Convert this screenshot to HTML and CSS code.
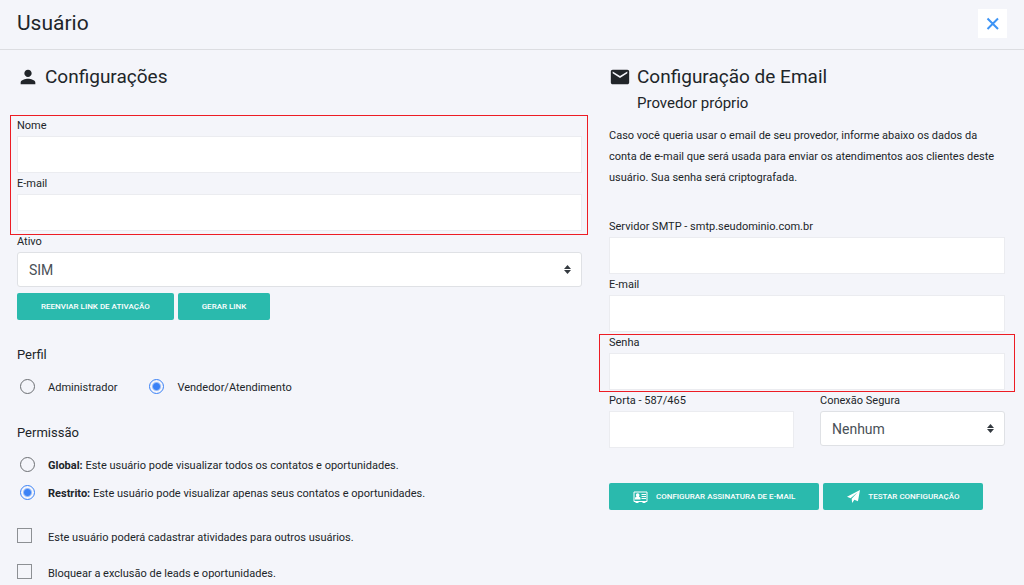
FILE: index.html
```
<!DOCTYPE html>
<html lang="pt-BR">
<head>
  <meta charset="UTF-8">
  <meta name="viewport" content="width=device-width, initial-scale=1.0">
  <title>Usuário</title>
  <link rel="stylesheet" href="styles.css">
</head>
<body>
  <header class="topbar">
    <h1>Usuário</h1>
    <button type="button" class="close" aria-label="Fechar">
      <svg width="14" height="14" viewBox="0 0 14 14"><path d="M1.500 1.500l10.500 10.500M12 1.500l-10.500 10.500"/></svg>
    </button>
  </header>

  <form class="columns">
    <section>
      <div class="heading">
        <svg class="icon-user" width="22" height="22" viewBox="0 0 24 24"><path d="M12 12c2.200 0 4-1.800 4-4s-1.800-4-4-4-4 1.800-4 4 1.800 4 4 4zm0 2c-2.700 0-8 1.300-8 4v2h16v-2c0-2.700-5.300-4-8-4z"/></svg>
        <h2>Configurações</h2>
      </div>

      <div class="highlight">
        <div class="field">
          <label for="nome">Nome</label>
          <input type="text" id="nome">
        </div>
        <div class="field">
          <label for="email">E-mail</label>
          <input type="text" id="email">
        </div>
      </div>
      <div class="field">
        <label for="ativo">Ativo</label>
        <select id="ativo">
          <option>SIM</option>
          <option>NÃO</option>
        </select>
      </div>
      <div class="buttons link-buttons">
        <button type="button" class="btn">REENVIAR LINK DE ATIVAÇÃO</button>
        <button type="button" class="btn">GERAR LINK</button>
      </div>

      <h3 id="perfil">Perfil</h3>
      <div class="options inline" role="radiogroup" aria-labelledby="perfil">
        <label class="option"><input type="radio" name="perfil"><span>Administrador</span></label>
        <label class="option"><input type="radio" name="perfil" checked><span>Vendedor/Atendimento</span></label>
      </div>

      <h3 id="permissao">Permissão</h3>
      <div class="options" role="radiogroup" aria-labelledby="permissao">
        <label class="option"><input type="radio" name="permissao"><span><b>Global:</b> Este usuário pode visualizar todos os contatos e oportunidades.</span></label>
        <label class="option"><input type="radio" name="permissao" checked><span><b>Restrito:</b> Este usuário pode visualizar apenas seus contatos e oportunidades.</span></label>
      </div>

      <div class="checks">
        <label class="option"><input type="checkbox"><span>Este usuário poderá cadastrar atividades para outros usuários.</span></label>
        <label class="option"><input type="checkbox"><span>Bloquear a exclusão de leads e oportunidades.</span></label>
      </div>
    </section>

    <section>
      <div class="heading heading-mail">
        <svg class="icon-mail" width="22" height="22" viewBox="0 0 24 24"><path d="M20 4H4c-1.100 0-2 .9-2 2v12c0 1.100.9 2 2 2h16c1.100 0 2-.9 2-2V6c0-1.100-.9-2-2-2zm0 4l-8 5-8-5V6l8 5 8-5v2z"/></svg>
        <div>
          <h2>Configuração de Email</h2>
          <p class="subtitle">Provedor próprio</p>
        </div>
      </div>
      <p class="intro">Caso você queria usar o email de seu provedor, informe abaixo os dados da conta de e-mail que será usada para enviar os atendimentos aos clientes deste usuário. Sua senha será criptografada.</p>

      <div class="field">
        <label for="smtp">Servidor SMTP - smtp.seudominio.com.br</label>
        <input type="text" id="smtp">
      </div>
      <div class="field">
        <label for="smtp-email">E-mail</label>
        <input type="text" id="smtp-email">
      </div>
      <div class="highlight highlight-wide">
        <div class="field">
          <label for="senha">Senha</label>
          <input type="password" id="senha">
        </div>
      </div>
      <div class="row">
        <div class="field">
          <label for="porta">Porta - 587/465</label>
          <input type="text" id="porta">
        </div>
        <div class="field">
          <label for="conexao">Conexão Segura</label>
          <select id="conexao">
            <option>Nenhum</option>
            <option>SSL</option>
            <option>TLS</option>
          </select>
        </div>
      </div>
      <div class="buttons mail-buttons">
        <button type="button" class="btn">
          <svg width="15" height="12" viewBox="0 0 15 12">
            <path class="line" d="M1 1h13v9.500H1zM8.500 3.500H13M8.500 5.500H13M8.500 7.500H13"/>
            <path d="M2 8.500V7.200c0-.8.600-1.300 1.500-1.500C3 5.200 2.900 4.700 2.900 4.100c0-1.100.7-1.900 1.800-1.900s1.800.8 1.800 1.900c0 .6-.2 1.100-.6 1.600.9.200 1.600.7 1.600 1.500v1.300zM2.500 10h3v2h-3zM9.500 10h3v2h-3z"/>
          </svg>
          CONFIGURAR ASSINATURA DE E-MAIL
        </button>
        <button type="button" class="btn">
          <svg width="13" height="13" viewBox="0 0 14 14"><path d="M14 0l-2.200 12.200-3.900-1.600L5.600 14 5 9.500 11.500 2.500 3.800 8.900 0 7.400z"/></svg>
          TESTAR CONFIGURAÇÃO
        </button>
      </div>
    </section>
  </form>
</body>
</html>
```
FILE: styles.css
```
* {
  box-sizing: border-box;
}
body {
  margin: 0;
  font-family: Roboto, sans-serif;
  font-size: 11px;
  line-height: 21px;
  color: #212529;
  background-color: #f4f5fa;
}
h1, h2, h3, p {
  margin: 0;
  font-weight: 400;
}
.topbar {
  display: flex;
  align-items: center;
  justify-content: space-between;
  height: 50px;
  padding: 0 17px;
  padding-bottom: 2px;
  border-bottom: 1px solid #dcdde1;
}
h1 {
  font-size: 21px;
}
.close {
  display: flex;
  align-items: center;
  justify-content: center;
  width: 29px;
  height: 29px;
  padding: 0;
  border: none;
  background-color: #fff;
  cursor: pointer;
}
.close svg {
  fill: none;
  stroke: #3d94f6;
  stroke-width: 2;
}
.columns {
  display: grid;
  grid-template-columns: 565fr 396fr;
  column-gap: 27px;
  padding: 15px 19px 0 17px;
}
.heading {
  display: flex;
  align-items: flex-start;
  gap: 6px;
  height: 50px;
}
.heading svg {
  flex: none;
  margin-top: 1px;
  fill: #212529;
}
.heading-mail {
  height: 60px;
}
h2 {
  font-size: 19px;
  line-height: 24px;
}
.subtitle {
  font-size: 15px;
  line-height: 28px;
}
.intro {
  margin-bottom: 28px;
  padding-right: 2px;
}
.highlight {
  position: relative;
}
.highlight::after {
  content: "";
  position: absolute;
  inset: 0 -6px -4px -7px;
  border: 1px solid #ed1c24;
  pointer-events: none;
}
.highlight-wide::after {
  inset: 2px -10px -2px -10px;
}
.field {
  display: flex;
  flex-direction: column;
}
.field input,
.field select {
  width: 100%;
  font-family: inherit;
  font-size: 14px;
  color: #495057;
  background-color: #fff;
  border: 1px solid #ebecf0;
}
.field input {
  height: 37px;
  padding: 0 10px;
}
.field select {
  height: 35px;
  padding: 0 11px;
  border: 1px solid #dfe1e5;
  border-radius: 3px;
  appearance: none;
  background-image: url("data:image/svg+xml,%3Csvg xmlns='http://www.w3.org/2000/svg' viewBox='0 0 7 9'%3E%3Cpath fill='%23343a40' d='M3.5 0L7 4H0zM0 5h7L3.500 9z'/%3E%3C/svg%3E");
  background-repeat: no-repeat;
  background-position: right 10px center;
  background-size: 7px 9px;
}
.buttons {
  display: flex;
  gap: 4px;
}
.btn {
  display: flex;
  align-items: center;
  gap: 8px;
  height: 27px;
  padding: 0 24px;
  border: none;
  border-radius: 2px;
  font-family: inherit;
  font-size: 8px;
  font-weight: 500;
  color: #fff;
  background-color: #2abaad;
  cursor: pointer;
}
.btn svg {
  fill: #fff;
}
.btn .line {
  fill: none;
  stroke: #fff;
}
.link-buttons {
  margin: 6px 0 24px;
}
.mail-buttons {
  margin-top: 35px;
}
h3 {
  font-size: 13px;
  line-height: 21px;
}
.options {
  margin: 8px 0 28px;
}
.inline {
  display: flex;
  gap: 29px;
  margin-bottom: 21px;
}
.option {
  display: flex;
  align-items: center;
  height: 28px;
}
.option input {
  appearance: none;
  flex: none;
  width: 15px;
  height: 15px;
  margin: 0 13px 1px 3px;
  border: 1px solid #6c6f73;
  border-radius: 50%;
}
.option input:checked {
  border-color: #3b82f6;
  background: radial-gradient(circle, #3b82f6 3px, transparent 5px);
}
.option input[type="checkbox"] {
  margin: 0 16px 3px 0;
  border-color: #8d9094;
  border-radius: 0;
}
.checks {
  display: grid;
  gap: 8px;
  margin-top: -12px;
}
.row {
  display: grid;
  grid-template-columns: 1fr 1fr;
  column-gap: 26px;
}
```
